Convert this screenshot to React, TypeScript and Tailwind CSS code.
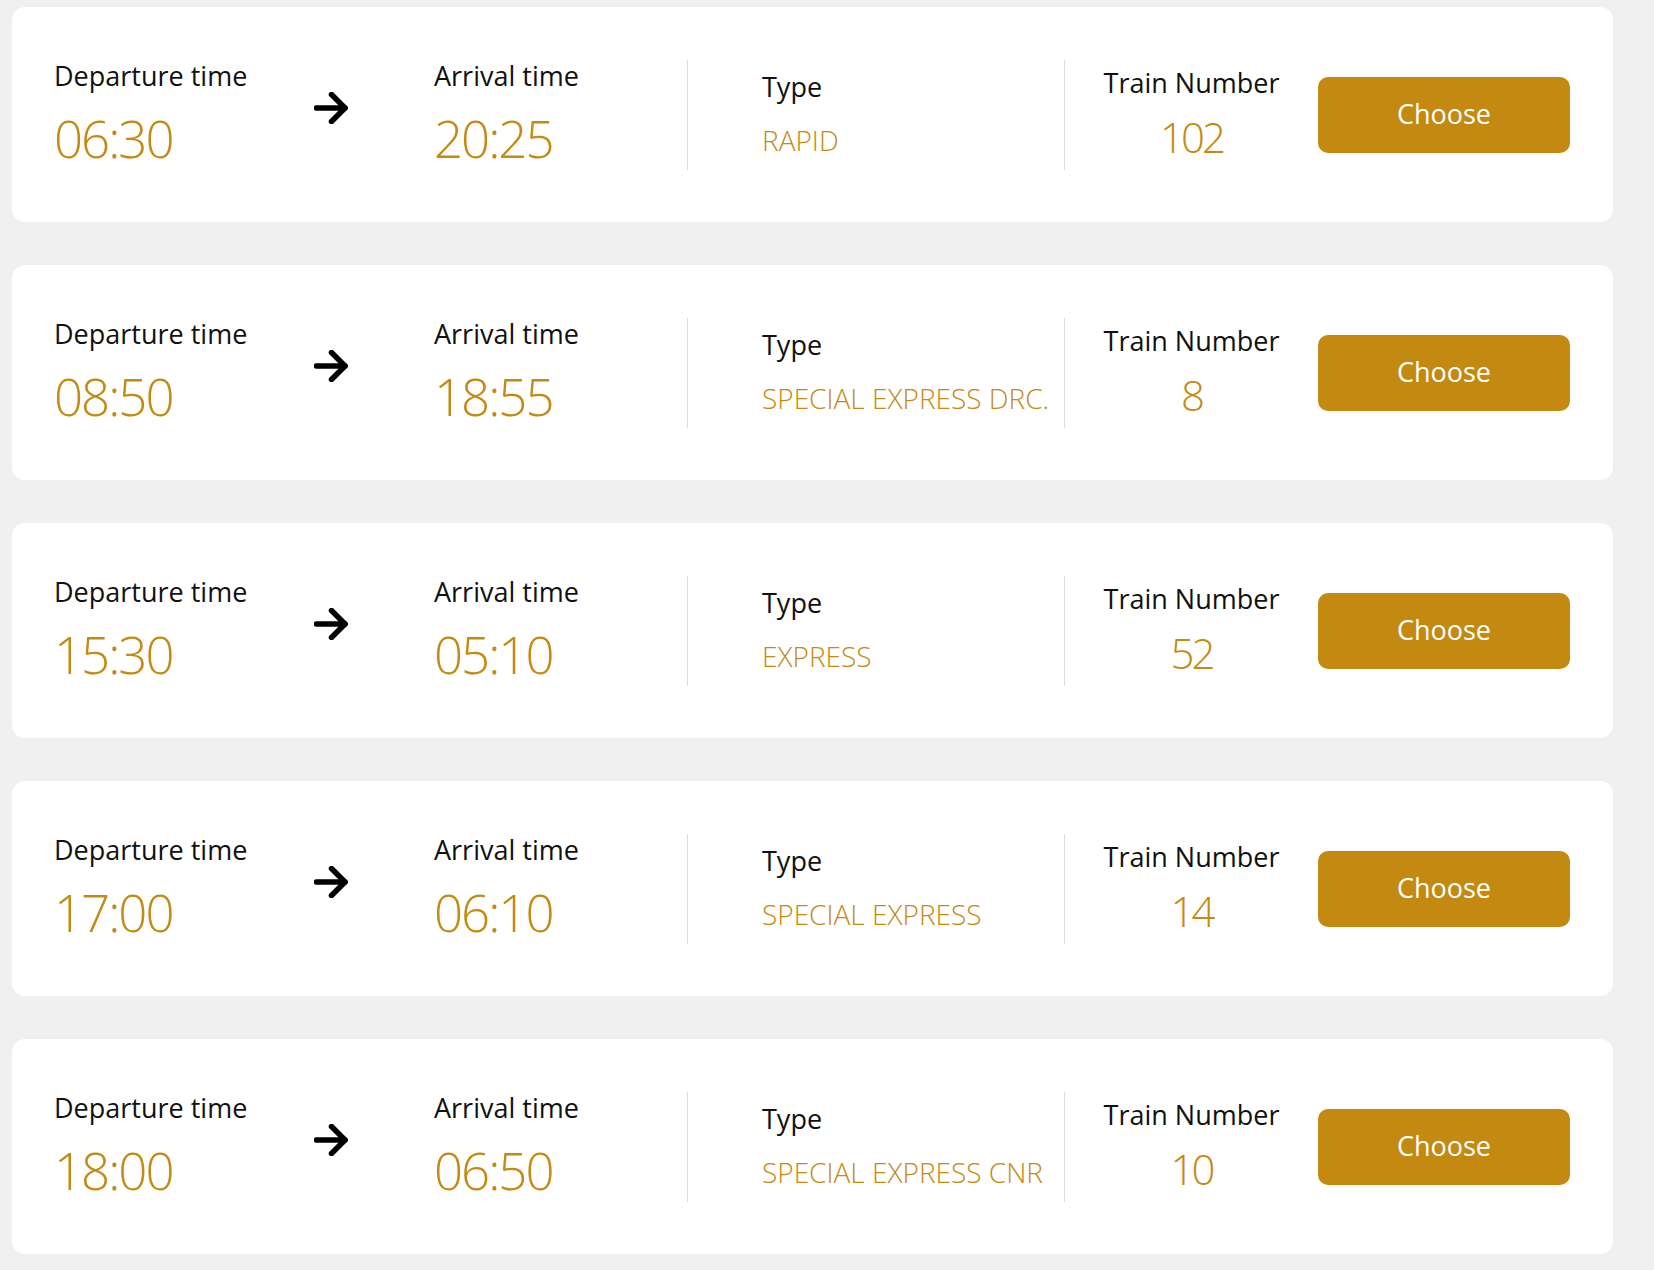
const trains = [
    {dep: "06:30", arr: "20:25", type: "RAPID", number: "102"},
    {dep: "08:50", arr: "18:55", type: "SPECIAL EXPRESS DRC.", number: "8"},
    {dep: "15:30", arr: "05:10", type: "EXPRESS", number: "52"},
    {dep: "17:00", arr: "06:10", type: "SPECIAL EXPRESS", number: "14"},
    {dep: "18:00", arr: "06:50", type: "SPECIAL EXPRESS CNR", number: "10"},
];

function Arrow() {
    return (
        <svg width="34" height="32" viewBox="0 0 34 32" fill="none" stroke="#000" strokeWidth="5.5" strokeLinecap="round" strokeLinejoin="round">
            <path d="M2.5 16H31"/>
            <path d="M17.5 2.5L31 16L17.5 29.5"/>
        </svg>
    );
}

function TimeBlock({label, time}: {label: string, time: string}) {
    return (
        <div className="flex flex-col pb-[4px]">
            <div className="text-[27px] leading-[32px] text-[#111]">{label}</div>
            <div className="mt-[18px] text-[51px] leading-[56px] font-light tracking-[-2px] text-[#c48a12]">{time}</div>
        </div>
    );
}

function TrainCard({train}: {train: typeof trains[number]}) {
    return (
        <div className="bg-white rounded-[13px] h-[215px] flex items-center pl-[42px] pr-[43px]">
            <div className="w-[260px] shrink-0">
                <TimeBlock label="Departure time" time={train.dep}/>
            </div>
            <div className="w-[120px] shrink-0 flex items-center mb-[13px]">
                <Arrow/>
            </div>
            <div className="w-[253px] shrink-0">
                <TimeBlock label="Arrival time" time={train.arr}/>
            </div>
            <div className="w-px h-[110px] bg-[#dcdcdc] shrink-0"></div>
            <div className="w-[376px] shrink-0 pl-[74px] flex flex-col pb-[3px]">
                <div className="text-[27px] leading-[32px] text-[#111]">Type</div>
                <div className="mt-[21px] text-[28px] leading-[32px] font-light text-[#c48a12] whitespace-nowrap">{train.type}</div>
            </div>
            <div className="w-px h-[110px] bg-[#dcdcdc] shrink-0"></div>
            <div className="w-[253px] shrink-0 flex flex-col items-center pb-[2px]">
                <div className="text-[27px] leading-[32px] text-[#111]">Train Number</div>
                <div className="mt-[14px] text-[42px] leading-[48px] font-light tracking-[-3px] text-[#c48a12]">{train.number}</div>
            </div>
            <button className="w-[252px] h-[76px] shrink-0 rounded-[10px] bg-[#c48910] text-white text-[27px] flex items-center justify-center">
                Choose
            </button>
        </div>
    );
}

export default function App() {
    return (
        <div className="min-h-[1270px] bg-[#f0f0f0] pt-[7px] pl-[12px]" style={{fontFamily: '"Open Sans", "Noto Sans", sans-serif'}}>
            <div className="w-[1601px] flex flex-col gap-[43px]">
                {trains.map((train, index) => (
                    <TrainCard key={index} train={train}/>
                ))}
            </div>
        </div>
    );
}
